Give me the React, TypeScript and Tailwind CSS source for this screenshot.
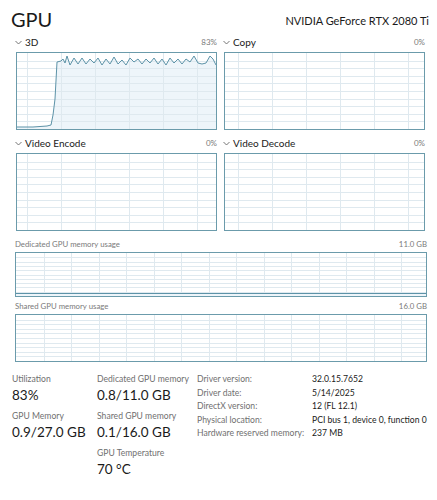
import React from "react"

const line3d: [number, number][] = [
  [0, 74], [16, 74], [30, 73], [34, 72], [36, 62], [38, 46], [40, 9],
  [44, 8], [46, 6], [48, 10], [50, 3], [53, 12], [57, 5], [61, 11], [65, 5],
  [69, 11], [73, 6], [77, 10], [81, 5], [85, 12], [89, 6], [93, 11], [97, 4],
  [101, 11], [105, 7], [109, 12], [113, 5], [117, 9], [121, 6], [125, 11],
  [129, 6], [133, 10], [137, 5], [141, 11], [145, 6], [149, 12], [153, 5],
  [157, 10], [161, 6], [165, 11], [169, 6], [173, 9], [177, 3], [181, 10],
  [185, 11], [189, 10], [193, 3], [196, 6], [199, 12],
]

function Grid({ w, h, offset, step, rows }: { w: number; h: number; offset: number; step: number; rows: number }) {
  const vs: number[] = []
  for (let x = offset; x < w; x += step) vs.push(Math.round(x) + 0.5)
  const hs: number[] = []
  for (let i = 1; i < rows; i++) hs.push(Math.round((h * i) / rows) + 0.5)
  return (
    <g stroke="#dfe9ef" strokeWidth="1">
      {vs.map((x) => (
        <line key={"v" + x} x1={x} y1={0} x2={x} y2={h} />
      ))}
      {hs.map((y) => (
        <line key={"h" + y} x1={0} y1={y} x2={w} y2={y} />
      ))}
    </g>
  )
}

function Chevron() {
  return (
    <svg width="7" height="5" viewBox="0 0 7 5" className="mr-[3px]">
      <path d="M0.5 1 L3.5 4 L6.5 1" fill="none" stroke="#666" strokeWidth="0.9" />
    </svg>
  )
}

function SmallChart({ label, pct, offset, data }: { label: string; pct: string; offset: number; data?: [number, number][] }) {
  const w = 199
  const h = 76
  const pts = data ? data.map((p) => p.join(",")).join(" ") : ""
  return (
    <div className="flex flex-col">
      <div className="flex items-center justify-between h-[14px]">
        <div className="flex items-center text-[10px] text-[#1a1a1a] -ml-[1px]">
          <Chevron />
          {label}
        </div>
        <div className="text-[8px] text-[#7a7a7a]">{pct}</div>
      </div>
      <div className="mt-[3px] border border-[#6b9bab] w-[201px] h-[78px]">
        <svg width={w} height={h} className="block">
          {data && <polygon points={`0,${h} ${pts} ${w},${h}`} fill="#eef5fa" />}
          <Grid w={w} h={h} offset={offset} step={34} rows={10} />
          {data && <polyline points={pts} fill="none" stroke="#5d93a8" strokeWidth="1" />}
        </svg>
      </div>
    </div>
  )
}

function MemChart({ label, max, h, fill }: { label: string; max: string; h: number; fill: number }) {
  const w = 410
  return (
    <div className="flex flex-col w-[412px]">
      <div className="flex items-center justify-between h-[12px] text-[7.8px] text-[#7a7a7a]">
        <span>{label}</span>
        <span>{max}</span>
      </div>
      <div className="border border-[#6b9bab] w-[412px] mt-[1px]" style={{ height: h + 2 }}>
        <svg width={w} height={h} className="block">
          <Grid w={w} h={h} offset={27.5} step={27.5} rows={10} />
          {fill > 0 && (
            <>
              <rect x={0} y={h - fill} width={w} height={fill} fill="#eef5fa" />
              <line x1={0} y1={h - fill + 0.5} x2={w} y2={h - fill + 0.5} stroke="#5d93a8" strokeWidth="1" />
            </>
          )}
        </svg>
      </div>
    </div>
  )
}

function Stat({ label, value }: { label: string; value: string }) {
  return (
    <div className="flex flex-col">
      <div className="h-[12px] leading-[12px] text-[8.6px] text-[#707070] whitespace-nowrap">{label}</div>
      <div className="h-[20px] leading-[20px] text-[13.5px] text-[#1a1a1a] whitespace-nowrap">{value}</div>
    </div>
  )
}

const details: [string, string][] = [
  ["Driver version:", "32.0.15.7652"],
  ["Driver date:", "5/14/2025"],
  ["DirectX version:", "12 (FL 12.1)"],
  ["Physical location:", "PCI bus 1, device 0, function 0"],
  ["Hardware reserved memory:", "237 MB"],
]

export default function App() {
  return (
    <div className="w-[437px] h-[500px] bg-white overflow-hidden" style={{ fontFamily: 'Lato, "Open Sans", sans-serif' }}>
      <div className="flex items-end justify-between pl-[11px] pr-[8px] pt-[3px] h-[33px]">
        <div className="text-[20px] leading-[28px] text-[#1a1a1a]">GPU</div>
        <div className="text-[11px] leading-[20px] text-[#1a1a1a] mb-[2px]">NVIDIA GeForce RTX 2080 Ti</div>
      </div>

      <div className="ml-[16px] mt-[2px] grid grid-cols-[201px_201px] gap-x-[7px] gap-y-[6px]">
        <SmallChart label="3D" pct="83%" offset={10} data={line3d} />
        <SmallChart label="Copy" pct="0%" offset={13} />
        <SmallChart label="Video Encode" pct="0%" offset={10} />
        <SmallChart label="Video Decode" pct="0%" offset={13} />
      </div>

      <div className="ml-[15px] mt-[8px] flex flex-col gap-[4px]">
        <MemChart label="Dedicated GPU memory usage" max="11.0 GB" h={43} fill={3} />
        <MemChart label="Shared GPU memory usage" max="16.0 GB" h={46} fill={0} />
      </div>

      <div className="flex pl-[12px] mt-[11px]">
        <div className="w-[85px] flex flex-col gap-[5px]">
          <Stat label="Utilization" value="83%" />
          <Stat label="GPU Memory" value="0.9/27.0 GB" />
        </div>
        <div className="w-[100px] flex flex-col gap-[5px]">
          <Stat label="Dedicated GPU memory" value="0.8/11.0 GB" />
          <Stat label="Shared GPU memory" value="0.1/16.0 GB" />
          <Stat label="GPU Temperature" value="70 °C" />
        </div>
        <div className="grid grid-cols-[115px_auto] auto-rows-[13.5px] text-[8.6px] leading-[13.5px]">
          {details.map(([k, v]) => (
            <React.Fragment key={k}>
              <div className="text-[#707070] whitespace-nowrap">{k}</div>
              <div className="text-[#1a1a1a] whitespace-nowrap">{v}</div>
            </React.Fragment>
          ))}
        </div>
      </div>
    </div>
  )
}
